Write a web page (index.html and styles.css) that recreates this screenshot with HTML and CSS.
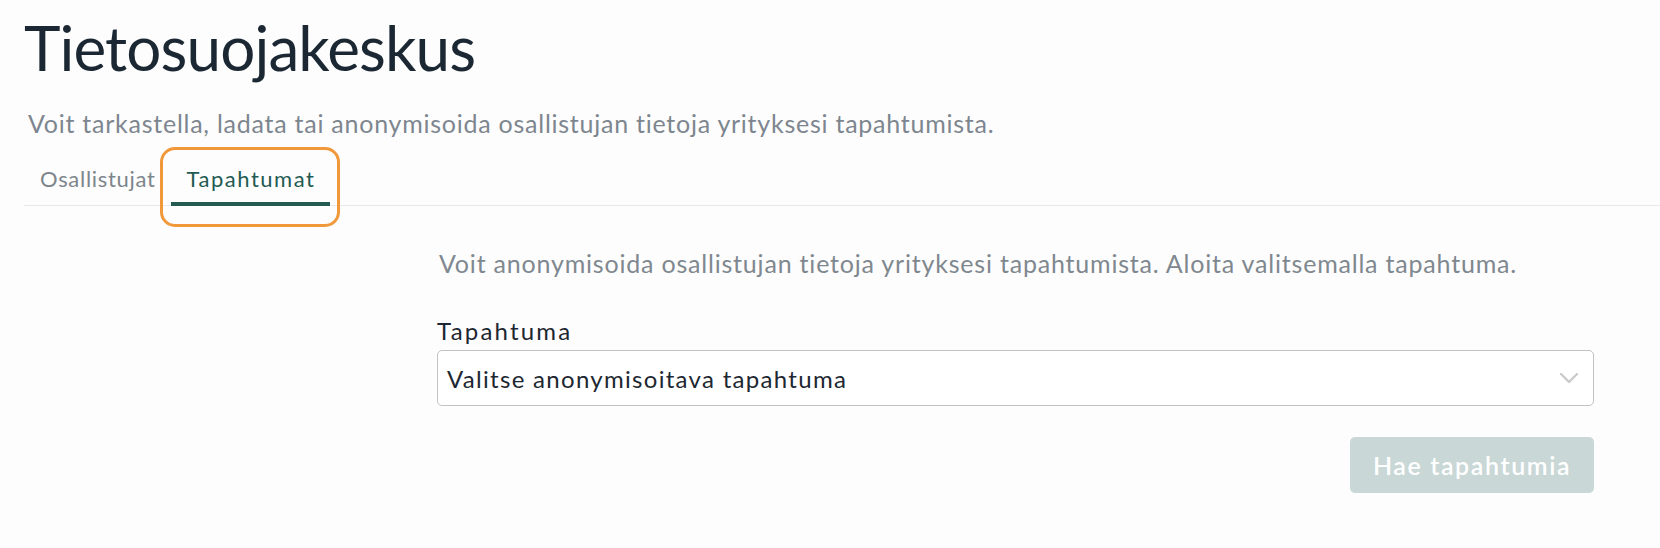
FILE: index.html
```html
<!DOCTYPE html>
<html lang="fi">
<head>
<meta charset="utf-8">
<title>Tietosuojakeskus</title>
<link rel="stylesheet" href="styles.css">
</head>
<body>
<main class="page">
  <h1 class="title">Tietosuojakeskus</h1>
  <p class="lead">Voit tarkastella, ladata tai anonymisoida osallistujan tietoja yrityksesi tapahtumista.</p>
  <nav class="tabs">
    <a class="tab">Osallistujat</a>
    <a class="tab tab-active">Tapahtumat<span class="highlight"></span></a>
  </nav>
  <section class="panel">
    <p class="info">Voit anonymisoida osallistujan tietoja yrityksesi tapahtumista. Aloita valitsemalla tapahtuma.</p>
    <label class="label">Tapahtuma</label>
    <div class="select">
      <span class="select-text">Valitse anonymisoitava tapahtuma</span>
      <svg class="chevron" width="20" height="12" viewBox="0 0 20 12"><path d="M2 2 L10 10 L18 2" fill="none" stroke="#cacaca" stroke-width="2.4" stroke-linecap="round" stroke-linejoin="round"/></svg>
    </div>
    <div class="actions">
      <button class="btn">Hae tapahtumia</button>
    </div>
  </section>
</main>
</body>
</html>
```
FILE: styles.css
```css
html, body {
  margin: 0;
  padding: 0;
  background: #fdfdfd;
}
body {
  font-family: Lato, "Open Sans", sans-serif;
  color: #1c2833;
}
.page {
  padding-left: 24px;
}
.title {
  margin: 7px 0 0 0;
  font-size: 62px;
  line-height: 80px;
  font-weight: 400;
  letter-spacing: -0.9px;
  color: #1b2833;
}
.lead {
  margin: 20px 0 0 4px;
  font-size: 25px;
  line-height: 32px;
  letter-spacing: 0.75px;
  color: #7d868f;
}
.tabs {
  margin-top: 25px;
  display: flex;
  border-bottom: 1px solid #e9e9e9;
}
.tab {
  position: relative;
  padding: 0 15px 8px 16px;
  font-size: 22px;
  line-height: 30px;
  letter-spacing: 0.7px;
  color: #7d868c;
  border-bottom: 4px solid transparent;
  margin-bottom: -1px;
}
.tab-active {
  color: #235a52;
  letter-spacing: 1.5px;
  border-bottom-color: #235a52;
}
.highlight {
  position: absolute;
  left: -11px;
  right: -10px;
  top: -17px;
  bottom: -25px;
  border: 3px solid #f0983a;
  border-radius: 15px;
}
.panel {
  margin: 41px 66px 0 413px;
}
.info {
  margin: 0 0 0 2px;
  font-size: 25px;
  line-height: 32px;
  letter-spacing: 0.8px;
  color: #80888f;
}
.label {
  display: block;
  margin-top: 36px;
  font-size: 24px;
  line-height: 32px;
  letter-spacing: 2.2px;
  color: #1d2731;
}
.select {
  margin-top: 3px;
  height: 56px;
  box-sizing: border-box;
  border: 1px solid #c2c2c2;
  border-radius: 5px;
  background: #fff;
  display: flex;
  align-items: center;
  justify-content: space-between;
  padding: 0 14px 0 9px;
}
.select-text {
  font-size: 24px;
  letter-spacing: 1.3px;
  color: #1d2731;
}
.actions {
  margin-top: 31px;
  display: flex;
  justify-content: flex-end;
}
.btn {
  width: 244px;
  height: 56px;
  border: none;
  border-radius: 5px;
  background: #c9d7d6;
  color: #ffffff;
  font-family: Lato, "Open Sans", sans-serif;
  font-size: 25px;
  font-weight: 600;
  letter-spacing: 1.6px;
}
```
